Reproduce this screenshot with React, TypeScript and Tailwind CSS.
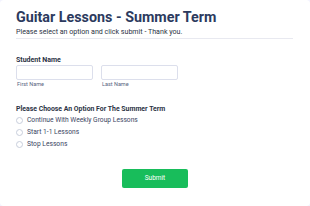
import React from "react";

export default function App() {
  const opts = ["Continue With Weekly Group Lessons", "Start 1-1 Lessons", "Stop Lessons"];
  return (
    <div className="w-[310px] h-[206px] bg-[#f3f3fe] overflow-hidden" style={{ fontFamily: "Roboto, 'Noto Sans', sans-serif" }}>
      <div className="w-[310px] h-[206px] bg-white rounded-[4px] px-4 pt-[8px]">
        <h1 className="text-[14.3px] leading-[18px] font-bold text-[#2c3a5e]">Guitar Lessons - Summer Term</h1>
        <p className="text-[7.1px] leading-[10px] text-[#2c3345] mt-[1px]">
          Please select an option and click submit - Thank you.
        </p>
        <div className="h-px bg-[#e8e9f0] mt-[1px] w-[277px]" />
        <div className="mt-[17px] text-[7px] leading-[9px] font-bold text-[#2c3345]">Student Name</div>
        <div className="flex gap-2">
          <div className="flex flex-col">
            <div className="w-[77px] h-[15px] border border-[#dcdfec] rounded-[2px] bg-white" />
            <span className="text-[5.5px] leading-[7px] text-[#57647e] mt-[1px] ml-[1px]">First Name</span>
          </div>
          <div className="flex flex-col">
            <div className="w-[77px] h-[15px] border border-[#dcdfec] rounded-[2px] bg-white" />
            <span className="text-[5.5px] leading-[7px] text-[#57647e] mt-[1px] ml-[1px]">Last Name</span>
          </div>
        </div>
        <div className="mt-[17px] text-[6.9px] leading-[9px] font-bold text-[#2c3345]">Please Choose An Option For The Summer Term</div>
        <div className="flex flex-col">
          {opts.map((o) => (
            <div key={o} className="flex items-center h-[12px]">
              <div className="w-[7px] h-[7px] rounded-full border border-[#c8cedb] bg-white" />
              <span className="ml-[4px] text-[6.7px] leading-[9px] font-normal text-[#3a4563]">{o}</span>
            </div>
          ))}
        </div>
        <div className="flex justify-center mt-[19px]">
          <button className="w-[66px] h-[19px] bg-[#18bd5b] rounded-[2px] text-white text-[6.5px]">Submit</button>
        </div>
      </div>
    </div>
  );
}
